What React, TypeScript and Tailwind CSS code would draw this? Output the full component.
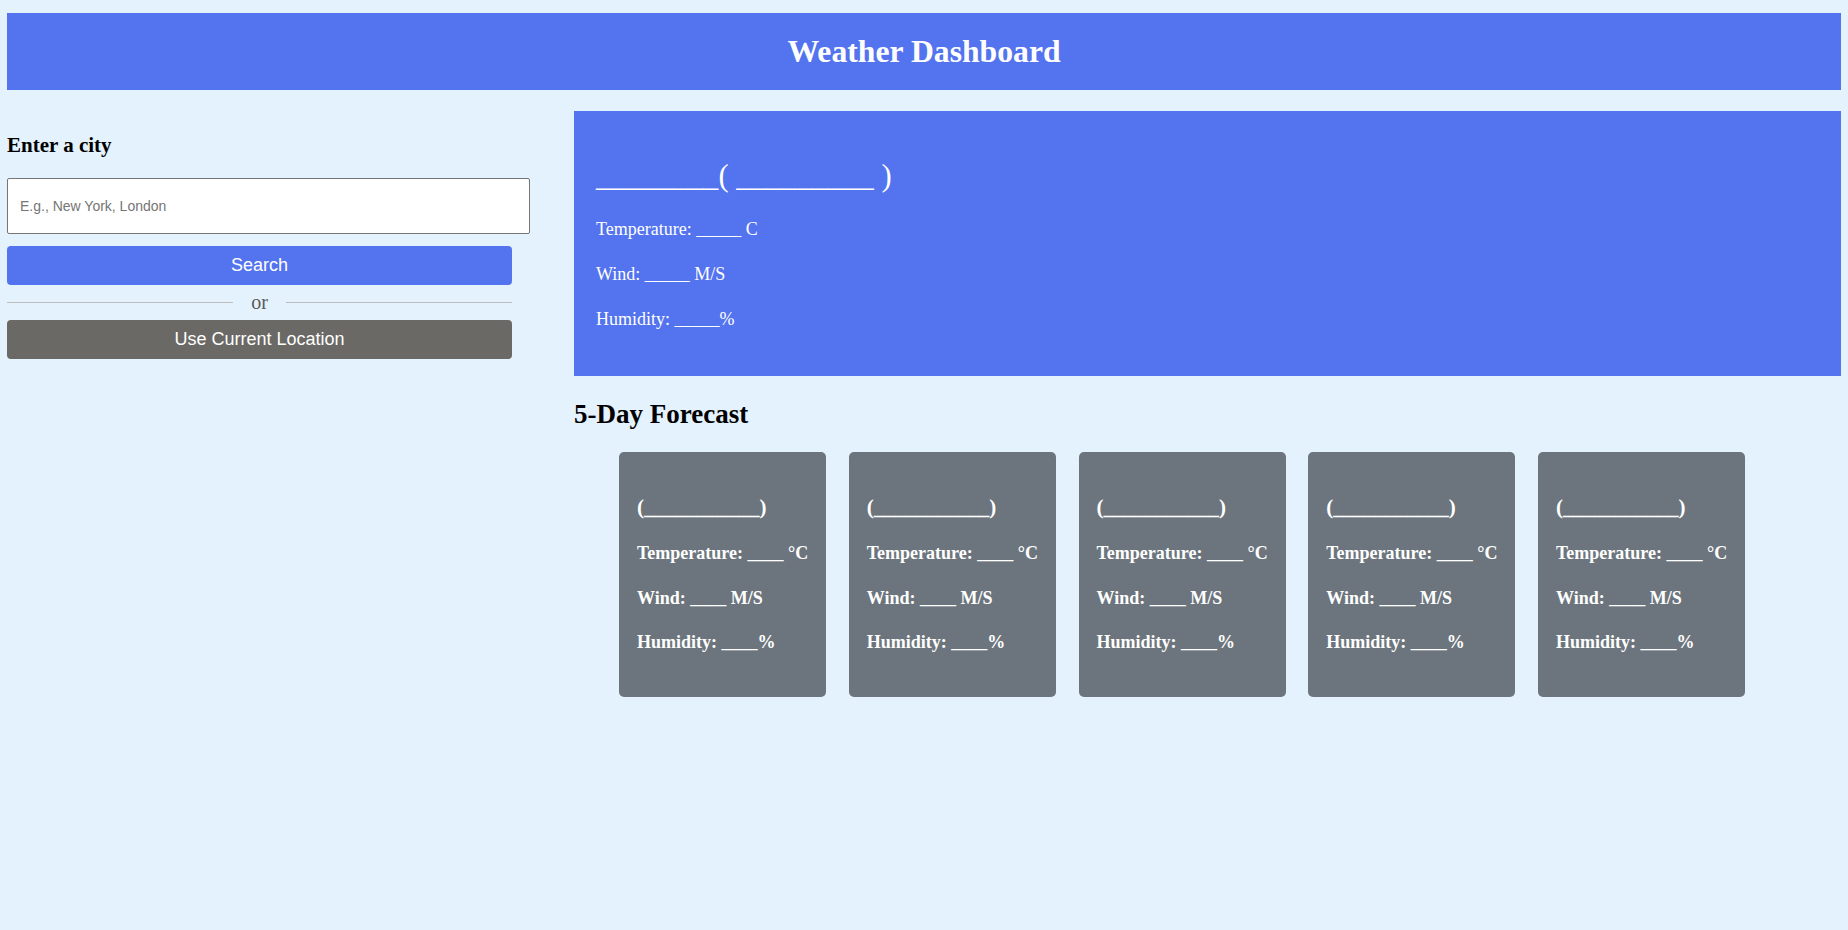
import React from "react";

const serif = { fontFamily: '"Liberation Serif", "Times New Roman", serif' };

function ForecastCard() {
  return (
    <div className="w-[207px] h-[245px] shrink-0 rounded-[5px] bg-[#6c757d] pl-[18px] pt-[42px] font-bold text-white">
      <div className="text-[21px] leading-[26px]">(___________)</div>
      <p className="mt-[21px] text-[18px] leading-[24px]">Temperature: ____ °C</p>
      <p className="mt-[21px] text-[18px] leading-[24px]">Wind: ____ M/S</p>
      <p className="mt-[20px] text-[18px] leading-[24px]">Humidity: ____%</p>
    </div>
  );
}

export default function App() {
  return (
    <div
      className="min-h-screen bg-[#e3f2fd] px-[7px] pt-[13px] text-black"
      style={serif}
    >
      <header className="flex h-[77px] items-center justify-center bg-[#5373ef]">
        <h1 className="text-[31.7px] font-bold leading-[36px] text-white">Weather Dashboard</h1>
      </header>

      <div className="mt-[21px] flex">
        <aside className="w-[523px] shrink-0">
          <h3 className="mt-[22px] text-[21px] font-bold leading-[24px]">Enter a city</h3>
          <input
            type="text"
            placeholder="E.g., New York, London"
            className="mt-[21px] block h-[56px] w-[523px] rounded-[2px] border border-[#767676] bg-white pl-[12px] text-[14px] text-black outline-none placeholder:text-[#757575]"
            style={{ fontFamily: '"Liberation Sans", Arial, sans-serif' }}
          />
          <button
            className="mt-[12px] block h-[39px] w-[505px] rounded-[4px] bg-[#5373ef] text-[18px] text-white"
            style={{ fontFamily: '"Liberation Sans", Arial, sans-serif' }}
          >
            Search
          </button>
          <div className="flex h-[35px] w-[505px] items-center">
            <div className="h-px flex-1 bg-[#bdbdbd]" />
            <span className="mx-[18px] -mt-[2px] text-[20px] leading-[20px] text-[#5a5a5a]">or</span>
            <div className="h-px flex-1 bg-[#bdbdbd]" />
          </div>
          <button
            className="block h-[39px] w-[505px] rounded-[4px] bg-[#6b6965] text-[18px] text-white"
            style={{ fontFamily: '"Liberation Sans", Arial, sans-serif' }}
          >
            Use Current Location
          </button>
        </aside>

        <main className="ml-[44px] flex-1">
          <section className="h-[265px] bg-[#5373ef] pl-[22px] pt-[47px] text-white">
            <h2 className="text-[30.6px] font-normal leading-[36px]">________( _________ )</h2>
            <p className="mt-[23px] text-[18px] leading-[24px]">Temperature: _____ C</p>
            <p className="mt-[21px] text-[18px] leading-[24px]">Wind: _____ M/S</p>
            <p className="mt-[21px] text-[18px] leading-[24px]">Humidity: _____%</p>
          </section>

          <h2 className="mt-[22px] text-[27px] font-bold leading-[32px]">5-Day Forecast</h2>

          <div className="mt-[22px] flex gap-[22.75px] pl-[45px]">
            <ForecastCard />
            <ForecastCard />
            <ForecastCard />
            <ForecastCard />
            <ForecastCard />
          </div>
        </main>
      </div>
    </div>
  );
}
